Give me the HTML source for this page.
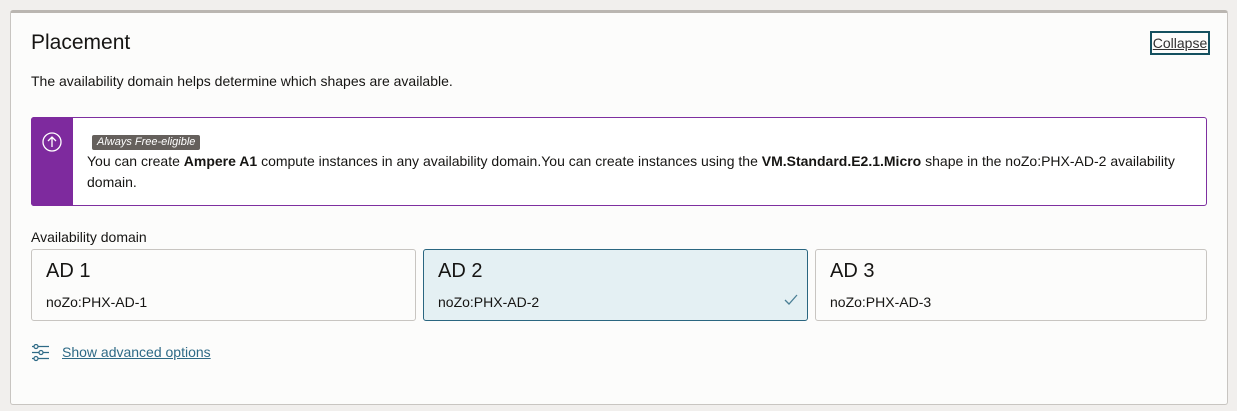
<!DOCTYPE html>
<html><head><style>
body{margin:0;width:1237px;height:411px;background:#f1efed;font-family:"Liberation Sans",Arial,sans-serif;color:#161513;position:relative;overflow:hidden}
.card{position:absolute;left:10px;top:10px;width:1216px;height:391px;background:#fcfcfb;border:1px solid #c8c5c1;border-top:3px solid #bab6b1;border-radius:3px}
.a{position:absolute}
h1{position:absolute;left:31px;top:31px;margin:0;font-size:21px;font-weight:normal}
.col{position:absolute;left:1150px;top:31px;width:60px;height:24px;border:2px solid #14505f;box-sizing:border-box;font-size:14px;line-height:20px;text-align:center;color:#313030;text-decoration:underline}
.desc{left:31px;top:73px;font-size:14px}
.ban{left:31px;top:117px;width:1174px;height:87px;border:1px solid #7e2fa0;border-radius:3px;background:#fff}
.strip{position:absolute;left:-1px;top:-1px;width:42px;height:89px;background:#7e2a9e;border-radius:3px 0 0 3px}
.tag{left:92px;top:135px;background:#65605c;color:#fff;font-style:italic;font-size:11px;padding:0 5px;height:15px;line-height:15px;border-radius:2px}
.bt{left:87px;top:151px;width:1095px;font-size:14px;line-height:21px}
.lbl{left:31px;top:229px;font-size:14px}
.ad{position:absolute;top:249px;border:1px solid #c8c5c1;border-radius:3px;background:#fcfcfb;box-sizing:border-box;height:72px}
.ad .t{position:absolute;left:14px;top:10px;font-size:20px}
.ad .s{position:absolute;left:14px;top:44px;font-size:14px}
.sel{background:#e4f0f3;border-color:#2a6680}
.lnk{left:62px;top:344px;font-size:14px;color:#2e6a86;text-decoration:underline}
</style></head><body>
<div class="card"></div>
<h1>Placement</h1>
<div class="col">Collapse</div>
<div class="a desc">The availability domain helps determine which shapes are available.</div>
<div class="a ban"><div class="strip"><svg width="42" height="40" style="position:absolute;left:0;top:0"><circle cx="21" cy="25" r="9" fill="none" stroke="#fff" stroke-width="1.3"/><path d="M21 30V20M17 24l4-4 4 4" fill="none" stroke="#fff" stroke-width="1.3"/></svg></div></div>
<div class="a tag">Always Free-eligible</div>
<div class="a bt">You can create <b>Ampere A1</b> compute instances in any availability domain.You can create instances using the <b>VM.Standard.E2.1.Micro</b> shape in the noZo:PHX-AD-2 availability domain.</div>
<div class="a lbl">Availability domain</div>
<div class="ad" style="left:31px;width:385px"><div class="t">AD 1</div><div class="s">noZo:PHX-AD-1</div></div>
<div class="ad sel" style="left:423px;width:385px"><div class="t">AD 2</div><div class="s">noZo:PHX-AD-2</div>
<svg class="a" style="left:360px;top:44px" width="14" height="12"><path d="M1 6l4 4 8-9" fill="none" stroke="#4a7f95" stroke-width="1.3"/></svg></div>
<div class="ad" style="left:815px;width:392px"><div class="t">AD 3</div><div class="s">noZo:PHX-AD-3</div></div>
<svg class="a" style="left:32px;top:344px" width="18" height="18" fill="none" stroke="#2e6a86" stroke-width="1.2"><path d="M0 2.5h2M6 2.5h11M0 8.5h7M11 8.5h6M0 14.5h2M6 14.5h11"/><circle cx="4" cy="2.5" r="2"/><circle cx="9" cy="8.5" r="2"/><circle cx="4" cy="14.5" r="2"/></svg>
<div class="a lnk">Show advanced options</div>
</body></html>
